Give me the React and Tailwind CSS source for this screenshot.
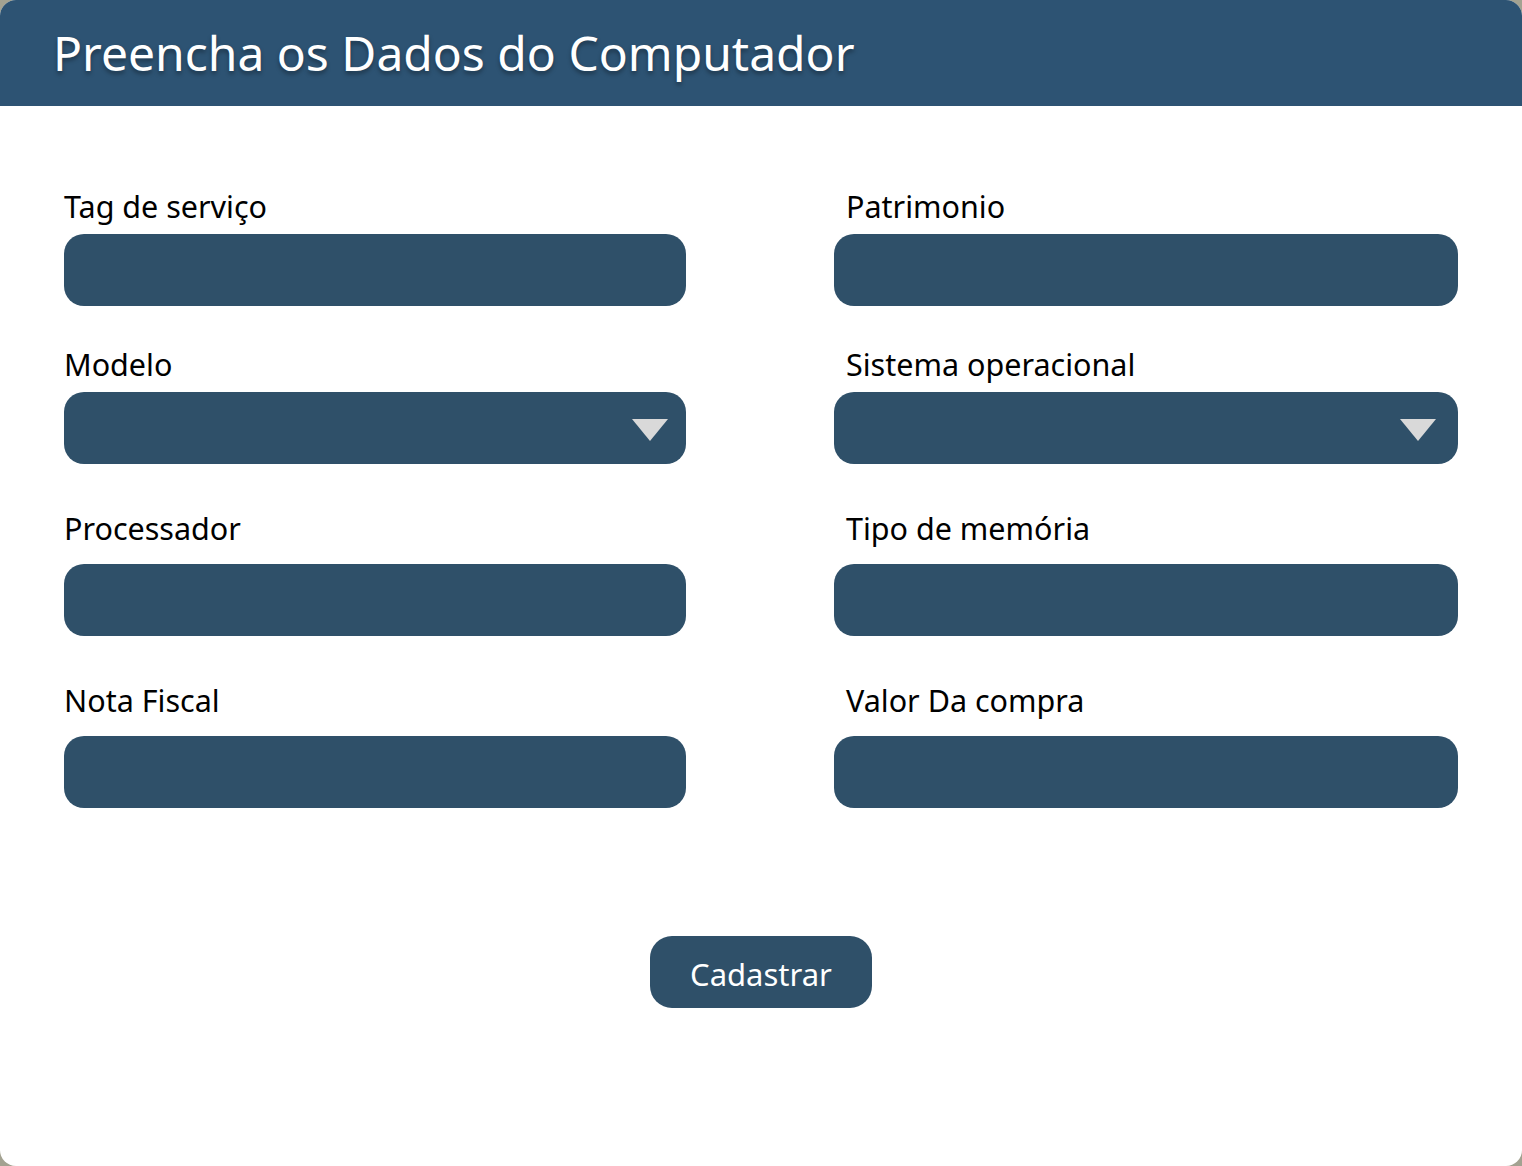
import React from 'react';

const font = { fontFamily: '"Noto Sans", "DejaVu Sans", sans-serif' };

const Field = ({ label, select, right, gap = 'mt-[14px]' }) => (
  <div className="flex flex-col">
    <label className={`text-[30.5px] leading-[28px] text-black ${right ? 'pl-3' : ''}`}>{label}</label>
    <div className={`relative ${gap} h-[72px] w-full rounded-[20px] bg-[#2f5069]`}>
      {select && (
        <svg
          className={`absolute top-[27px] ${right ? 'right-[22px]' : 'right-[18px]'}`}
          width="36"
          height="22"
          viewBox="0 0 36 22"
        >
          <polygon points="0,0 36,0 18,22" fill="#d9d9d9" />
        </svg>
      )}
    </div>
  </div>
);

const App = () => {
  return (
    <div className="min-h-[1166px] w-full bg-[#a3a291]" style={font}>
      <div className="flex h-[1166px] w-full flex-col overflow-hidden rounded-[16px] bg-white">
        <header className="flex h-[106px] items-center bg-[#2d5373] pl-[53px]">
          <h1 className="text-[48px] leading-none text-white [text-shadow:0_3px_4px_rgba(0,0,0,0.35)]">
            Preencha os Dados do Computador
          </h1>
        </header>

        <div className="grid grid-cols-[622px_624px] gap-x-[148px] pl-[64px] pt-[86px]">
          <Field label="Tag de serviço" />
          <Field label="Patrimonio" right />
          <div className="col-span-2 h-[44px]" />
          <Field label="Modelo" select />
          <Field label="Sistema operacional" select right />
          <div className="col-span-2 h-[50px]" />
          <Field label="Processador" gap="mt-[22px]" />
          <Field label="Tipo de memória" right gap="mt-[22px]" />
          <div className="col-span-2 h-[50px]" />
          <Field label="Nota Fiscal" gap="mt-[22px]" />
          <Field label="Valor Da compra" right gap="mt-[22px]" />
        </div>

        <div className="flex justify-center pt-[128px]">
          <button className="h-[72px] w-[222px] rounded-[22px] bg-[#2f5069] pt-[4px] text-[31px] text-white">
            Cadastrar
          </button>
        </div>
      </div>
    </div>
  );
};

export default App;
